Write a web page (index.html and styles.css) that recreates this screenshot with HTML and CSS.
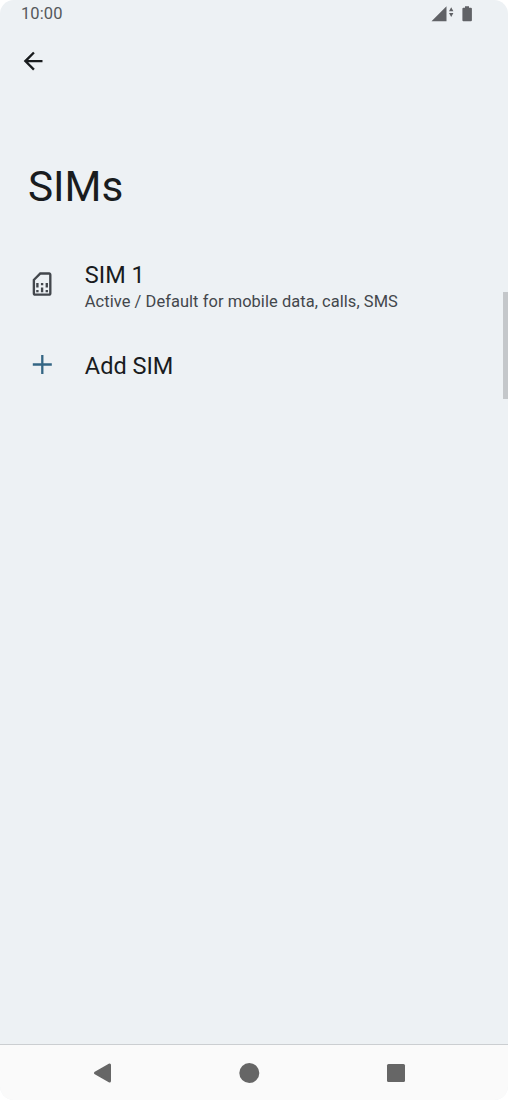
FILE: index.html
```html
<!DOCTYPE html>
<html lang="en">
<head>
<meta charset="utf-8">
<title>SIMs</title>
<link rel="stylesheet" href="styles.css">
</head>
<body>
<div class="phone">
  <header class="status">
    <span class="clock">10:00</span>
    <svg class="status-icons" width="42" height="16" viewBox="0 0 42 16">
      <path d="M0.500 15.200L15.500 0.300V15.200z"/>
      <path d="M18 5.200L20.200 1.200L22.400 5.200zM18 7L20.200 11L22.400 7z"/>
      <path d="M34 0.300h4v1.400h1.900q1 0 1 1v11.500q0 1-1 1h-7.500q-1 0-1-1v-11.500q0-1 1-1h1.600z"/>
    </svg>
  </header>
  <div class="toolbar">
    <svg class="back" width="28.2" height="28.2" viewBox="0 0 24 24"><path d="M20 11H7.830l5.590-5.590L12 4l-8 8 8 8 1.410-1.410L7.830 13H20z"/></svg>
  </div>
  <h1 class="title">SIMs</h1>
  <main class="list">
    <div class="row row-sim">
      <svg class="sim-icon" width="28.2" height="28.2" viewBox="0 0 24 24"><path fill-rule="evenodd" d="M18 2h-8L4 8v12c0 1.100.9 2 2 2h12c1.100 0 2-.9 2-2V4c0-1.100-.9-2-2-2zM18 20H6V8.830L10.830 4H18z"/><path d="M7 17h2v2H7zM15 17h2v2h-2zM7 11h2v4H7zM11 15h2v4h-2zM11 11h2v2h-2zM15 11h2v4h-2z"/></svg>
      <div class="text">
        <div class="name">SIM 1</div>
        <div class="summary">Active / Default for mobile data, calls, SMS</div>
      </div>
    </div>
    <div class="row row-add">
      <svg class="add-icon" width="28" height="28" viewBox="0 0 28 28"><path d="M14.300 5v19M4.800 14.500h19"/></svg>
      <div class="name">Add SIM</div>
    </div>
  </main>
  <nav class="navbar">
    <svg width="20" height="22" viewBox="0 0 20 22"><path d="M2.500 11L16.500 3V19z" stroke="#666" stroke-width="3" stroke-linejoin="round"/></svg>
    <svg width="20" height="20" viewBox="0 0 20 20"><circle cx="9.300" cy="10" r="10"/></svg>
    <svg width="18" height="18" viewBox="0 0 18 18"><rect width="18" height="18" rx="1.500"/></svg>
  </nav>
  <div class="scrollbar"></div>
</div>
</body>
</html>
```
FILE: styles.css
```css
* { box-sizing: border-box; }
body { margin: 0; background: #fff; font-family: Roboto, sans-serif; }
.phone {
  position: relative;
  display: flex;
  flex-direction: column;
  height: 1100px;
  background: #edf1f4;
  border-radius: 14px;
  overflow: hidden;
  color: #191c1e;
}
svg { overflow: visible; }
.status {
  display: flex;
  justify-content: space-between;
  height: 28px;
  padding: 4px 35px 0 21px;
  color: #55585b;
}
.clock { font-size: 16.500px; line-height: 20px; letter-spacing: 0.100px; }
.status-icons { fill: #606266; margin-top: 2px; }
.toolbar { height: 66px; padding: 19px 0 0 19px; }
.back { display: block; fill: #191c1e; }
.title {
  margin: 66px 0 0 28px;
  font-size: 42.300px;
  line-height: 54px;
  font-weight: 400;
}
.list { flex: 1; }
.row { display: flex; align-items: center; padding-left: 28px; }
.row svg { flex: none; }
.row-sim { height: 75px; margin-top: 33px; }
.sim-icon { width: 28.200px; margin-right: 28.600px; fill: #43474c; }
.row-add { height: 83px; }
.add-icon { margin-right: 28.800px; fill: none; stroke: #346684; stroke-width: 2.300; }
.name { font-size: 23.500px; line-height: 28px; padding-top: 5px; }
.summary {
  font-size: 16.450px;
  line-height: 22px;
  letter-spacing: 0.060px;
  color: #43474c;
  margin-top: 2px;
}
.navbar {
  display: flex;
  justify-content: space-between;
  align-items: center;
  height: 56px;
  padding: 0 103px 0 93px;
  background: #fafafa;
  border-top: 1px solid #cbced1;
  fill: #666;
}
.scrollbar {
  position: absolute;
  right: 0;
  top: 292px;
  width: 5px;
  height: 107px;
  background: #c4c7ca;
}
```
